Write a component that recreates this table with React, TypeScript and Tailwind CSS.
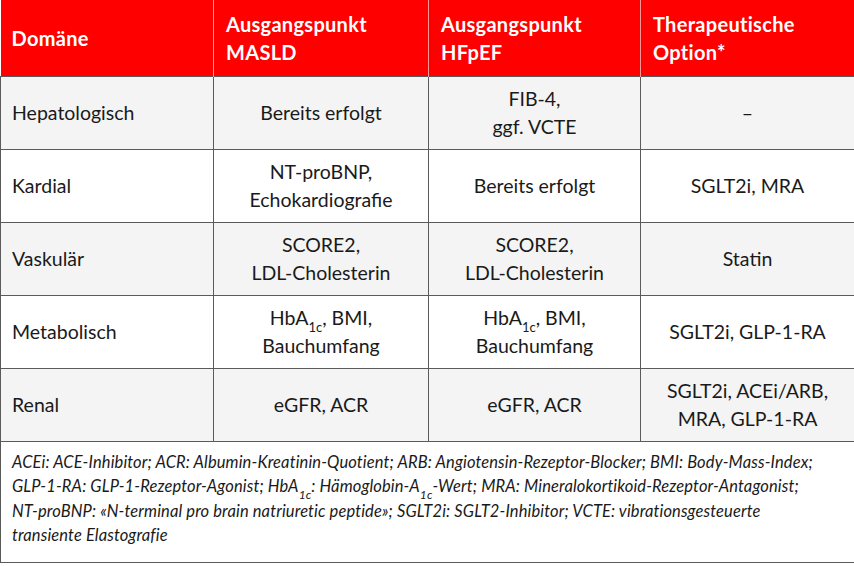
import React from 'react';

type Cell = React.ReactNode;

const HbA1c = () => (
  <>
    HbA<sub className="text-[13px] align-[-4px] leading-none">1c</sub>
  </>
);

const ROWS: { domain: string; masld: Cell; hfpef: Cell; option: Cell }[] = [
  {
    domain: 'Hepatologisch',
    masld: 'Bereits erfolgt',
    hfpef: (
      <>
        FIB-4,
        <br />
        ggf. VCTE
      </>
    ),
    option: '–',
  },
  {
    domain: 'Kardial',
    masld: (
      <>
        NT-proBNP,
        <br />
        Echokardiografie
      </>
    ),
    hfpef: 'Bereits erfolgt',
    option: 'SGLT2i, MRA',
  },
  {
    domain: 'Vaskulär',
    masld: (
      <>
        SCORE2,
        <br />
        LDL-Cholesterin
      </>
    ),
    hfpef: (
      <>
        SCORE2,
        <br />
        LDL-Cholesterin
      </>
    ),
    option: 'Statin',
  },
  {
    domain: 'Metabolisch',
    masld: (
      <>
        <HbA1c />, BMI,
        <br />
        Bauchumfang
      </>
    ),
    hfpef: (
      <>
        <HbA1c />, BMI,
        <br />
        Bauchumfang
      </>
    ),
    option: 'SGLT2i, GLP-1-RA',
  },
  {
    domain: 'Renal',
    masld: 'eGFR, ACR',
    hfpef: 'eGFR, ACR',
    option: (
      <>
        SGLT2i, ACEi/ARB,
        <br />
        MRA, GLP-1-RA
      </>
    ),
  },
];

export default function App() {
  return (
    <div
      className="w-[854px] h-[566px] bg-white text-[#1a1a1a]"
      style={{ fontFamily: 'Lato, "Open Sans", sans-serif' }}
    >
      <table className="w-[854px] table-fixed border-collapse text-[19.5px] leading-[28px]">
        <colgroup>
          <col className="w-[213px]" />
          <col className="w-[215px]" />
          <col className="w-[212px]" />
          <col className="w-[214px]" />
        </colgroup>
        <thead>
          <tr className="h-[76px] bg-[#ff0000] text-white font-bold text-left text-[20px] tracking-[0.3px]">
            <th className="px-[11px] align-middle border-r border-[#ff9a9a]">Domäne</th>
            <th className="px-[12px] align-middle border-r border-[#ff9a9a]">
              Ausgangspunkt
              <br />
              MASLD
            </th>
            <th className="px-[12px] align-middle border-r border-[#ff9a9a]">
              Ausgangspunkt
              <br />
              HFpEF
            </th>
            <th className="px-[12px] align-middle">
              Therapeutische
              <br />
              Option*
            </th>
          </tr>
        </thead>
        <tbody>
          {ROWS.map((row, i) => (
            <tr
              key={row.domain}
              className={`h-[73px] ${i % 2 === 0 ? 'bg-[#f4f4f4]' : 'bg-white'}`}
            >
              <td className="px-[11px] border border-[#5a5a5a]">{row.domain}</td>
              <td className="px-2 text-center border border-[#5a5a5a]">{row.masld}</td>
              <td className="px-2 text-center border border-[#5a5a5a]">{row.hfpef}</td>
              <td className="px-2 text-center border border-[#5a5a5a]">{row.option}</td>
            </tr>
          ))}
          <tr>
            <td
              colSpan={4}
              className="h-[113px] border border-[#5a5a5a] px-[11px] pt-[8px] pb-[14px] align-top italic text-[16.5px] tracking-[0.12px] leading-[24.5px] whitespace-nowrap"
            >
              ACEi: ACE-Inhibitor; ACR: Albumin-Kreatinin-Quotient; ARB: Angiotensin-Rezeptor-Blocker; BMI: Body-Mass-Index;
              <br />
              GLP-1-RA: GLP-1-Rezeptor-Agonist; HbA<sub className="text-[12px] align-[-4px] leading-none">1c</sub>: Hämoglobin-A
              <sub className="text-[12px] align-[-4px] leading-none">1c</sub>-Wert; MRA: Mineralokortikoid-Rezeptor-Antagonist;
              <br />
              NT-proBNP: «N-terminal pro brain natriuretic peptide»; SGLT2i: SGLT2-Inhibitor; VCTE: vibrationsgesteuerte
              <br />
              transiente Elastografie
            </td>
          </tr>
        </tbody>
      </table>
    </div>
  );
}
